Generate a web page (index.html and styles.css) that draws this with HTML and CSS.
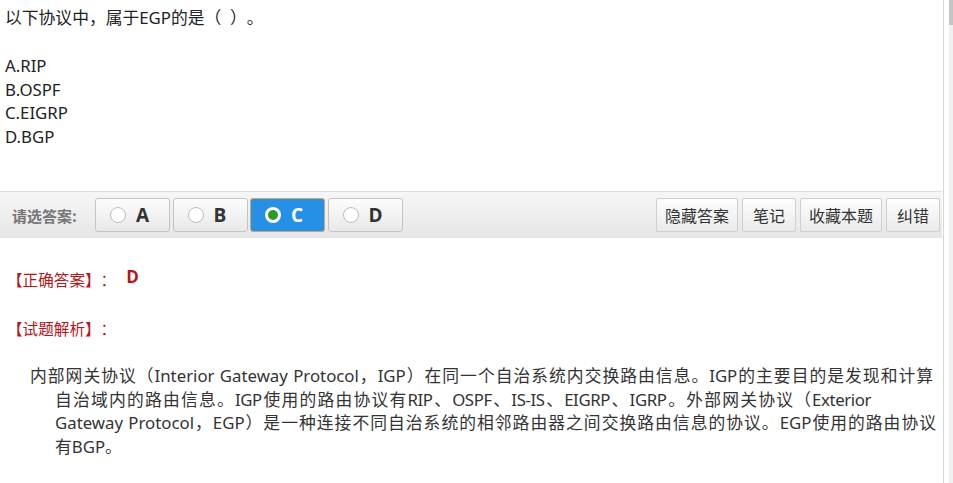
FILE: index.html
```html
<!DOCTYPE html>
<html lang="zh-CN">
<head>
<meta charset="utf-8">
<title>试题</title>
<link rel="stylesheet" href="styles.css">
</head>
<body>
<div class="page">
  <div class="main">
    <div class="question">
      <div class="stem">以下协议中，属于EGP的是（&nbsp;&nbsp;）。</div>
      <div class="options">
        <div>A.RIP</div>
        <div>B.OSPF</div>
        <div>C.EIGRP</div>
        <div>D.BGP</div>
      </div>
    </div>

    <div class="toolbar">
      <div class="choose">
        <span class="label">请选答案:</span>
        <button class="opt"><span class="radio"></span><span class="letter">A</span></button>
        <button class="opt"><span class="radio"></span><span class="letter">B</span></button>
        <button class="opt selected"><span class="radio"></span><span class="letter">C</span></button>
        <button class="opt"><span class="radio"></span><span class="letter">D</span></button>
      </div>
      <div class="actions">
        <button class="act">隐藏答案</button>
        <button class="act">笔记</button>
        <button class="act">收藏本题</button>
        <button class="act">纠错</button>
      </div>
    </div>

    <div class="answer">
      <div class="row"><span class="tag">【正确答案】：</span><span class="key">D</span></div>
      <div class="row analysis"><span class="tag">【试题解析】：</span></div>
      <p class="explain">
        <span class="ln l1">内部网关协议（Interior Gateway Protocol，IGP）在同一个自治系统内交换路由信息。IGP的主要目的是发现和计算</span>
        <span class="ln l2">自治域内的路由信息。IGP使用的路由协议有RIP、OSPF、IS-IS、EIGRP、IGRP。外部网关协议（Exterior</span>
        <span class="ln l3">Gateway Protocol，EGP）是一种连接不同自治系统的相邻路由器之间交换路由信息的协议。EGP使用的路由协议</span>
        <span class="ln l4">有BGP。</span>
      </p>
    </div>
  </div>
  <div class="gap"></div>
  <div class="scrollbar"><div class="thumb"></div></div>
</div>
</body>
</html>
```

FILE: styles.css
```css
html, body {
  margin: 0;
  padding: 0;
  background: #fff;
  height: 100%;
  overflow: hidden;
}
body {
  font-family: "Noto Sans", "Noto Sans CJK SC", sans-serif;
  color: #222;
  text-spacing-trim: space-all;
}
.page {
  display: flex;
  height: 483px;
}
.main {
  width: 943px;
  border-right: 1px solid #d6d6d6;
}
.gap {
  flex: 1;
}
.scrollbar {
  width: 4px;
  background: #f0f0f0;
}
.thumb {
  height: 25px;
  background: #c4c4c4;
}

.question {
  padding: 6px 0 0 5px;
  font-size: 16.8px;
  line-height: 23.5px;
  color: #222;
  height: 185px;
  box-sizing: border-box;
}
.options {
  margin-top: 24.75px;
}

.toolbar {
  margin: 6px 1px 0 0;
  height: 47px;
  box-sizing: border-box;
  border-top: 1px solid #dedede;
  background: linear-gradient(#f6f6f6, #e6e6e6);
  display: flex;
  align-items: center;
  justify-content: space-between;
  padding: 0 2px 0 12px;
}
.choose {
  display: flex;
  align-items: center;
  gap: 2.5px;
}
.label {
  font-family: "Noto Sans CJK SC", sans-serif;
  font-size: 15px;
  font-weight: bold;
  color: #777;
  width: 80.5px;
}
.opt {
  width: 75px;
  height: 34px;
  box-sizing: border-box;
  border: 1px solid #c4c4c4;
  border-radius: 3px;
  background: linear-gradient(#fdfdfd, #e8e8e8);
  display: flex;
  align-items: center;
  padding: 0 0 0 14px;
  gap: 10px;
  font-family: "Open Sans", sans-serif;
  cursor: pointer;
}
.radio {
  width: 16px;
  height: 16px;
  box-sizing: border-box;
  border-radius: 50%;
  border: 1px solid #bdbdbd;
  background: #fff;
}
.letter {
  font-size: 19px;
  font-weight: bold;
  color: #333;
  line-height: 1;
}
.opt.selected {
  background: #2590e6;
  border-color: #c9a96e;
}
.opt.selected .radio {
  border: 3px solid #fff;
  background: #2a9a2a;
}
.opt.selected .letter {
  color: #fff;
}

.actions {
  display: flex;
  gap: 4px;
}
.act {
  height: 34px;
  min-width: 54px;
  box-sizing: border-box;
  border: 1px solid #cfcfcf;
  border-radius: 2px;
  background: linear-gradient(#fdfdfd, #eaeaea);
  font-family: "Noto Sans CJK SC", sans-serif;
  font-size: 16px;
  color: #333;
  padding: 0 8px;
  cursor: pointer;
}

.answer {
  padding-top: 28.5px;
}
.row {
  padding-left: 7px;
  height: 24px;
  line-height: 24px;
  display: flex;
  align-items: center;
}
.analysis {
  margin-top: 25px;
}
.tag {
  font-family: "Noto Sans CJK SC", sans-serif;
  font-size: 15.6px;
  color: #b3161b;
}
.key {
  font-family: "Open Sans", sans-serif;
  font-weight: bold;
  font-size: 17px;
  color: #b3161b;
  margin-left: 10px;
  margin-top: -4px;
}
.explain {
  margin: 24.75px 0 0 0;
  padding-left: 30px;
  font-size: 16.8px;
  line-height: 23.5px;
  color: #333;
}
.ln {
  display: block;
  text-align-last: justify;
}
.l1 {
  width: 903px;
}
.l2 {
  margin-left: 25px;
  width: 816px;
  letter-spacing: -0.4px;
}
.l3 {
  margin-left: 25px;
  width: 881px;
}
.l4 {
  margin-left: 25px;
  text-align-last: auto;
}
```
